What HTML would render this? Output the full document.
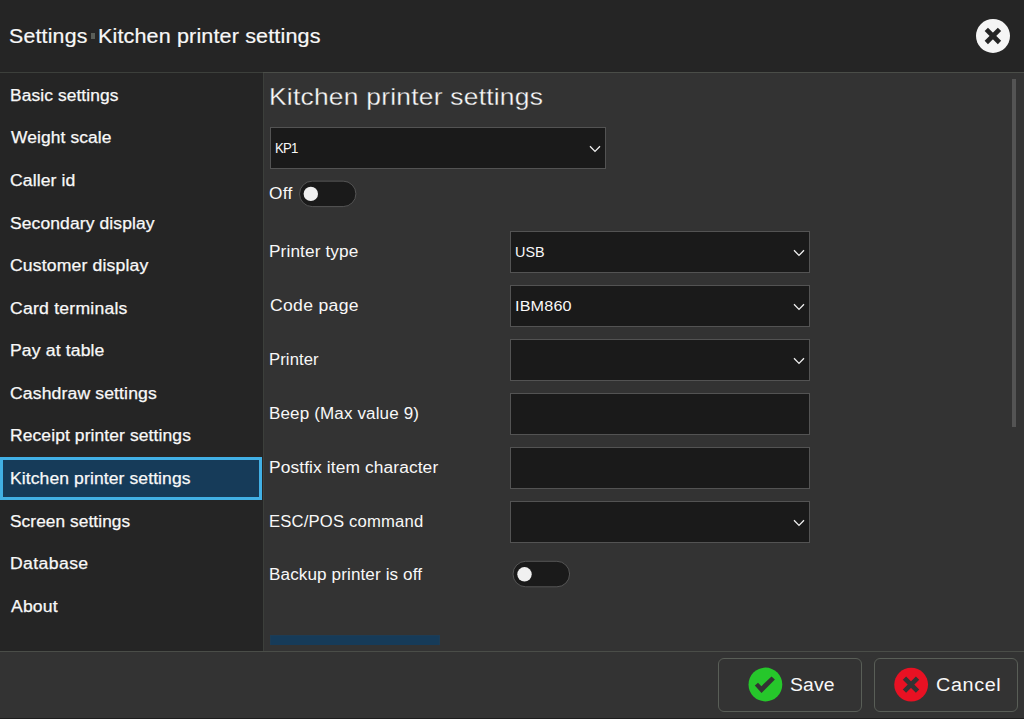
<!DOCTYPE html>
<html><head><meta charset="utf-8"><title>Settings</title>
<style>
*{box-sizing:border-box;margin:0;padding:0}
html,body{width:1024px;height:719px;overflow:hidden;background:#333;font-family:"Liberation Sans",sans-serif;color:#f8f8f8}
.abs{position:absolute}
#hdr{left:0;top:0;width:1024px;height:72px;background:#252525}
#hline{left:0;top:72px;width:1024px;height:1px;background:linear-gradient(90deg,#3c3f3b 0,#3c3f3b 263px,#4a4d48 263px)}
#side{left:0;top:73px;width:263px;height:578px;background:#252525}
#vline{left:263px;top:73px;width:1px;height:578px;background:#3c3f3b}
#main{left:264px;top:73px;width:760px;height:578px;background:#333}
#fline{left:0;top:651px;width:1024px;height:1px;background:#4a4d48}
#foot{left:0;top:652px;width:1024px;height:66px;background:#333}
#bline{left:0;top:718px;width:1024px;height:1px;background:#1e1e1e}
.t{position:absolute;white-space:nowrap;line-height:1;transform-origin:0 0}
.nav{-webkit-text-stroke:0.25px #f8f8f8}
.h1{-webkit-text-stroke:0.3px #333}
.ttl{-webkit-text-stroke:0.2px #f8f8f8}
#sel{left:0;top:457px;width:262px;height:43px;background:#163b59;border:3px solid #41b0e5}
.box{position:absolute;height:42px;background:#1a1a1a;border:1px solid #535353}
.tog{position:absolute;width:57px;height:26px;border-radius:13px;background:#1a1a1a;border:1px solid #4a4a4a}
.tog i{position:absolute;left:4px;top:5px;width:15px;height:15px;border-radius:50%;background:#f0f0f0}
.chev{position:absolute;width:12px;height:8px}
.btn{position:absolute;top:658px;width:144px;height:54px;border:1px solid #595e57;border-radius:6px;background:#333}
</style></head><body>
<div class="abs" id="hdr"></div>
<div class="abs" id="hline"></div>
<div class="abs" id="side"></div>
<div class="abs" id="vline"></div>
<div class="abs" id="main"></div>
<div class="abs" id="fline"></div>
<div class="abs" id="foot"></div>
<div class="abs" id="bline"></div>
<div class="abs" style="left:90.7px;top:33.4px;width:4.4px;height:5.2px;background:#5a5e58"></div>
<svg class="abs" style="left:975px;top:18px" width="36" height="36" viewBox="0 0 36 36"><circle cx="18" cy="17.9" r="17" fill="#f5f5f5"/><path d="M11.3 11.3 L24.5 24.5 M24.5 11.3 L11.3 24.5" stroke="#252525" stroke-width="4.7" fill="none"/></svg>
<div class="abs" id="sel"></div>
<div class="box" style="left:270px;top:127px;width:336px"></div>
<svg class="chev" style="left:589px;top:145px" viewBox="0 0 12 8"><path d="M1 1.2 L6 6.4 L11 1.2" stroke="#f0f0f0" stroke-width="1.3" fill="none"/></svg>
<svg class="abs" style="left:298px;top:180px" width="60" height="30" viewBox="0 0 60 30"><rect x="1.50" y="1.15" width="56.40" height="25.45" rx="12.7" fill="#1a1a1a" stroke="#555"/><circle cx="12.80" cy="13.90" r="7.2" fill="#f0f0f0"/></svg>
<div class="box" style="left:510px;top:231px;width:300px"></div>
<svg class="chev" style="left:793px;top:249px" viewBox="0 0 12 8"><path d="M1 1.2 L6 6.4 L11 1.2" stroke="#f0f0f0" stroke-width="1.3" fill="none"/></svg>
<div class="box" style="left:510px;top:285px;width:300px"></div>
<svg class="chev" style="left:793px;top:303px" viewBox="0 0 12 8"><path d="M1 1.2 L6 6.4 L11 1.2" stroke="#f0f0f0" stroke-width="1.3" fill="none"/></svg>
<div class="box" style="left:510px;top:339px;width:300px"></div>
<svg class="chev" style="left:793px;top:357px" viewBox="0 0 12 8"><path d="M1 1.2 L6 6.4 L11 1.2" stroke="#f0f0f0" stroke-width="1.3" fill="none"/></svg>
<div class="box" style="left:510px;top:393px;width:300px"></div>
<div class="box" style="left:510px;top:447px;width:300px"></div>
<div class="box" style="left:510px;top:501px;width:300px"></div>
<svg class="chev" style="left:793px;top:519px" viewBox="0 0 12 8"><path d="M1 1.2 L6 6.4 L11 1.2" stroke="#f0f0f0" stroke-width="1.3" fill="none"/></svg>
<svg class="abs" style="left:512px;top:560px" width="60" height="30" viewBox="0 0 60 30"><rect x="1.00" y="1.30" width="56.60" height="25.50" rx="12.7" fill="#1a1a1a" stroke="#555"/><circle cx="12.50" cy="14.30" r="7.2" fill="#f0f0f0"/></svg>
<div class="abs" style="left:270px;top:635px;width:170px;height:10px;background:#163b59;border:1px solid #1d3c55;border-bottom:0"></div>
<div class="abs" style="left:1012px;top:79px;width:4px;height:348px;background:#545454"></div>
<div class="btn" style="left:718px"></div>
<svg class="abs" style="left:748px;top:667px" width="36" height="36" viewBox="0 0 36 36"><g transform="translate(0.5,0.5)"><circle cx="16.9" cy="17" r="16.9" fill="#26c72b"/><polygon points="6.3,18.1 9.5,15.3 12.9,18.7 23,8.9 26.4,12 13,25.4" fill="#333"/></g></svg>
<div class="btn" style="left:874px"></div>
<svg class="abs" style="left:894px;top:667px" width="36" height="36" viewBox="0 0 36 36"><circle cx="17.15" cy="17.6" r="16.9" fill="#e81123"/><path d="M10.45 11.1 L23.55 24.2 M23.55 11.1 L10.45 24.2" stroke="#333" stroke-width="4.7" fill="none"/></svg>
<div class="t ttl" id="t1" style="left:8.60px;top:25.81px;font-size:20px;letter-spacing:0.197px;transform:scaleX(1.0632)">Settings</div>
<div class="t ttl" id="t2" style="left:97.57px;top:25.81px;font-size:20px;letter-spacing:0.135px;transform:scaleX(1.0770)">Kitchen printer settings</div>
<div class="t nav" id="n0" style="left:9.50px;top:88.31px;font-size:16px;letter-spacing:0.097px;transform:scaleX(1.0849)">Basic settings</div>
<div class="t nav" id="n1" style="left:10.51px;top:130.21px;font-size:16px;letter-spacing:0.104px;transform:scaleX(1.0874)">Weight scale</div>
<div class="t nav" id="n2" style="left:9.59px;top:173.01px;font-size:16px;letter-spacing:0.077px;transform:scaleX(1.1000)">Caller id</div>
<div class="t nav" id="n3" style="left:10.02px;top:215.51px;font-size:16px;letter-spacing:0.108px;transform:scaleX(1.0916)">Secondary display</div>
<div class="t nav" id="n4" style="left:9.59px;top:258.26px;font-size:16px;letter-spacing:0.135px;transform:scaleX(1.1000)">Customer display</div>
<div class="t nav" id="n5" style="left:9.59px;top:301.01px;font-size:16px;letter-spacing:0.208px;transform:scaleX(1.1000)">Card terminals</div>
<div class="t nav" id="n6" style="left:9.70px;top:343.31px;font-size:16px;letter-spacing:0.118px;transform:scaleX(1.1000)">Pay at table</div>
<div class="t nav" id="n7" style="left:9.59px;top:385.81px;font-size:16px;letter-spacing:0.113px;transform:scaleX(1.1000)">Cashdraw settings</div>
<div class="t nav" id="n8" style="left:9.70px;top:428.26px;font-size:16px;letter-spacing:0.100px;transform:scaleX(1.0899)">Receipt printer settings</div>
<div class="t nav" id="n9" style="left:9.64px;top:471.01px;font-size:16px;letter-spacing:0.094px;transform:scaleX(1.0948)">Kitchen printer settings</div>
<div class="t nav" id="n10" style="left:9.62px;top:513.51px;font-size:16px;letter-spacing:0.080px;transform:scaleX(1.0782)">Screen settings</div>
<div class="t nav" id="n11" style="left:9.70px;top:556.01px;font-size:16px;letter-spacing:0.363px;transform:scaleX(1.1000)">Database</div>
<div class="t nav" id="n12" style="left:10.55px;top:598.71px;font-size:16px;letter-spacing:0.140px;transform:scaleX(1.1000)">About</div>
<div class="t h1" id="h1" style="left:268.71px;top:85.10px;font-size:24px;letter-spacing:0.212px;transform:scaleX(1.1000)">Kitchen printer settings</div>
<div class="t " id="v0" style="left:274.70px;top:140.00px;font-size:15px;letter-spacing:-0.844px;transform:scaleX(0.8800)">KP1</div>
<div class="t " id="l0" style="left:268.68px;top:185.81px;font-size:16px;letter-spacing:0.231px;transform:scaleX(1.0786)">Off</div>
<div class="t " id="l1" style="left:268.52px;top:244.10px;font-size:16px;letter-spacing:0.113px;transform:scaleX(1.0750)">Printer type</div>
<div class="t " id="v1" style="left:514.55px;top:243.81px;font-size:15px;letter-spacing:0.010px;transform:scaleX(0.9595)">USB</div>
<div class="t " id="l2" style="left:269.65px;top:298.10px;font-size:16px;letter-spacing:0.273px;transform:scaleX(1.1000)">Code page</div>
<div class="t " id="v2" style="left:514.68px;top:298.00px;font-size:15px;letter-spacing:0.157px;transform:scaleX(1.0783)">IBM860</div>
<div class="t " id="l3" style="left:268.72px;top:352.10px;font-size:16px;letter-spacing:0.105px;transform:scaleX(1.0400)">Printer</div>
<div class="t " id="l4" style="left:268.52px;top:406.10px;font-size:16px;letter-spacing:0.130px;transform:scaleX(1.0637)">Beep (Max value 9)</div>
<div class="t " id="l5" style="left:268.67px;top:460.10px;font-size:16px;letter-spacing:0.100px;transform:scaleX(1.0849)">Postfix item character</div>
<div class="t " id="l6" style="left:268.72px;top:514.10px;font-size:16px;letter-spacing:0.169px;transform:scaleX(1.0406)">ESC/POS command</div>
<div class="t " id="l7" style="left:268.52px;top:567.01px;font-size:16px;letter-spacing:0.105px;transform:scaleX(1.0683)">Backup printer is off</div>
<div class="t " id="b1" style="left:789.70px;top:675.76px;font-size:18px;letter-spacing:0.120px;transform:scaleX(1.0760)">Save</div>
<div class="t " id="b2" style="left:935.67px;top:675.76px;font-size:18px;letter-spacing:0.559px;transform:scaleX(1.1000)">Cancel</div>
</body></html>
